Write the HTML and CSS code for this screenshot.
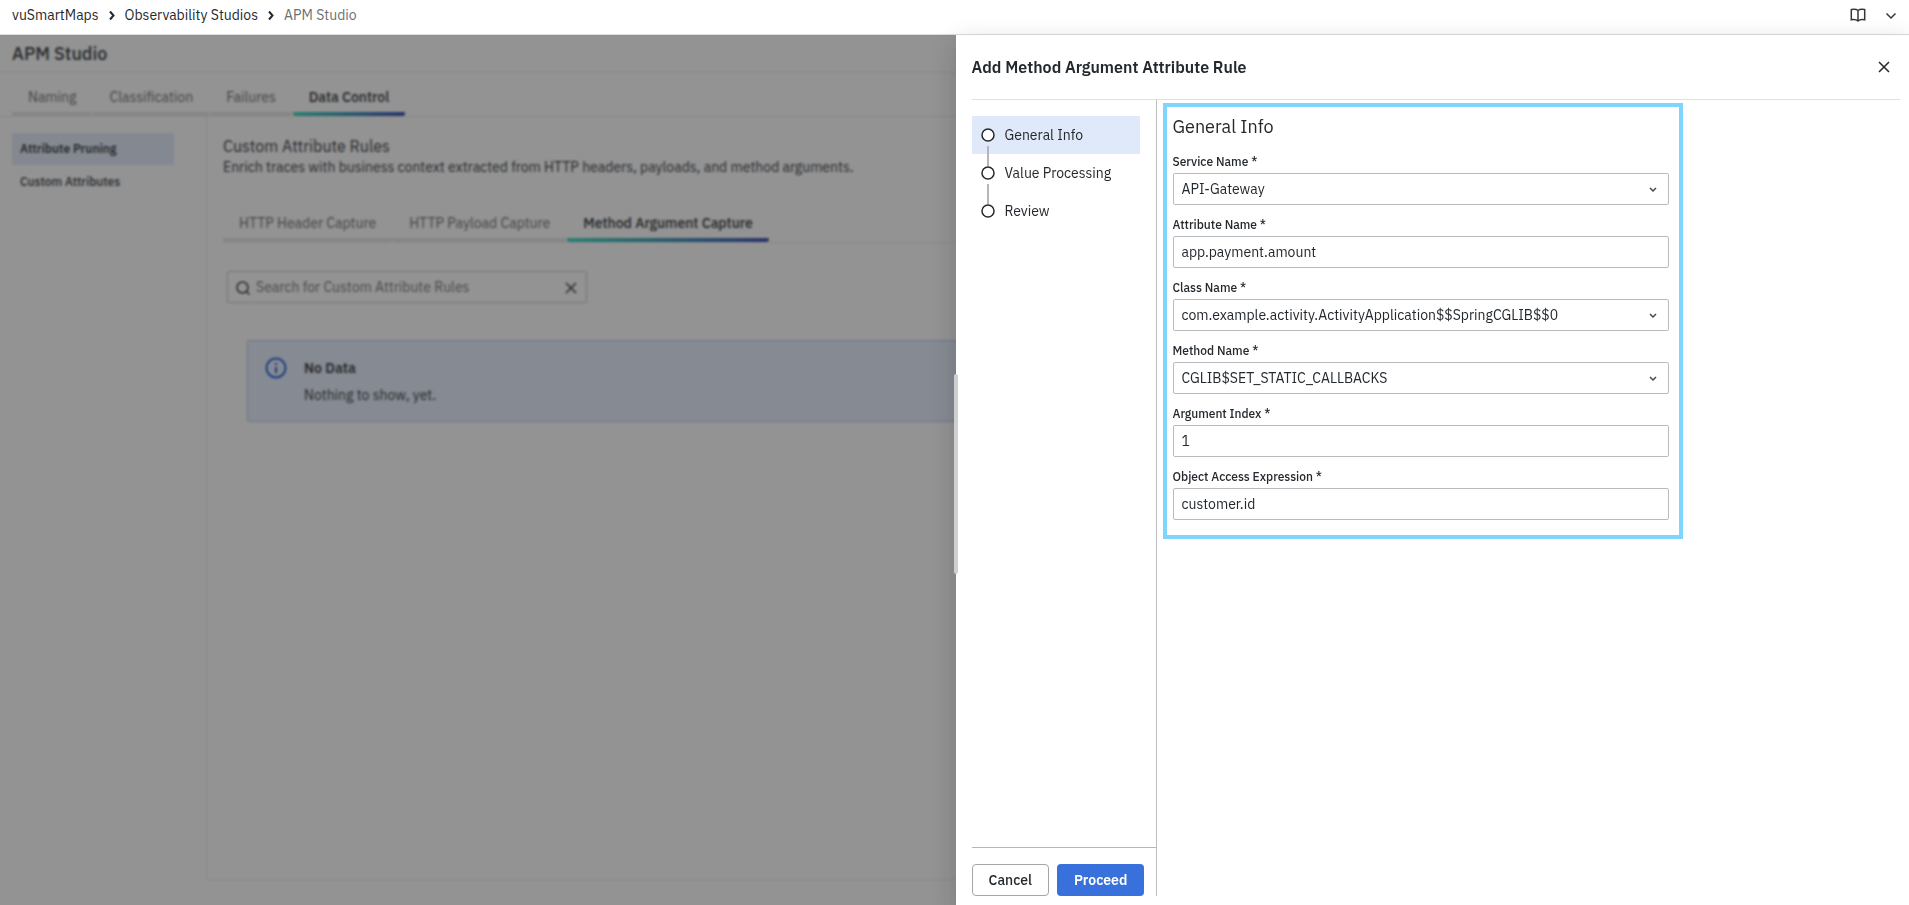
FILE: index.html
```html
<!DOCTYPE html>
<html lang="en">
<head>
    <meta charset="UTF-8">
    <meta name="viewport" content="width=device-width, initial-scale=1.0">
    <title>APM Studio - vuSmartMaps</title>
    <link rel="stylesheet" href="styles.css">
</head>
<body>
    <header class="topbar">
        <nav class="breadcrumbs" aria-label="Breadcrumbs">
            <a href="#">vuSmartMaps</a>
            <svg class="crumb-sep" viewBox="0 0 16 16"><path d="M6 4.500l3.500 4L6 12.500"/></svg>
            <a href="#">Observability Studios</a>
            <svg class="crumb-sep" viewBox="0 0 16 16"><path d="M6 4.500l3.500 4L6 12.500"/></svg>
            <span class="crumb-current">APM Studio</span>
        </nav>
        <div class="topbar-actions">
            <button class="icon-button" type="button" aria-label="Documentation">
                <svg class="icon" viewBox="0 0 16 16"><path d="M8 3.500C6.500 2.300 4 2.100 1.300 2.600V12.800C4 12.400 6.500 12.600 8 14C9.500 12.600 12 12.400 14.700 12.800V2.600C12 2.100 9.500 2.300 8 3.500ZM8 3.500V14"/></svg>
            </button>
            <button class="icon-button" type="button" aria-label="Toggle top bar">
                <svg class="icon" viewBox="0 0 16 16"><path d="M3.500 6.500L8 11L12.500 6.500"/></svg>
            </button>
        </div>
    </header>

    <div class="workspace">
        <main class="page">
            <h1 class="page-title">APM Studio</h1>
            <nav class="tabs main-tabs">
                <a class="tab" href="#">Naming</a>
                <a class="tab" href="#">Classification</a>
                <a class="tab" href="#">Failures</a>
                <a class="tab active" href="#">Data Control</a>
            </nav>
            <div class="page-body">
                <nav class="side-menu">
                    <a class="side-link active" href="#">Attribute Pruning</a>
                    <a class="side-link" href="#">Custom Attributes</a>
                </nav>
                <section class="rules">
                    <h2 class="rules-title">Custom Attribute Rules</h2>
                    <p class="rules-text">Enrich traces with business context extracted from HTTP headers, payloads, and method arguments.</p>
                    <nav class="tabs rules-tabs">
                        <a class="tab" href="#">HTTP Header Capture</a>
                        <a class="tab" href="#">HTTP Payload Capture</a>
                        <a class="tab active" href="#">Method Argument Capture</a>
                    </nav>
                    <div class="search">
                        <svg class="icon" viewBox="0 0 16 16"><circle cx="7.500" cy="8.500" r="5.500"/><path d="M11.500 12.500l3 3"/></svg>
                        <input class="search-input" type="text" placeholder="Search for Custom Attribute Rules" aria-label="Search for Custom Attribute Rules">
                        <button class="icon-button" type="button" aria-label="Clear search">
                            <svg class="icon" viewBox="0 0 16 16"><path d="M3 4l10 10M13 4L3 14"/></svg>
                        </button>
                    </div>
                    <div class="notice">
                        <svg class="notice-icon" viewBox="0 0 24 24"><circle cx="12" cy="12" r="9.500"/><path d="M12 11v6M12 7v2"/></svg>
                        <div>
                            <h3 class="notice-title">No Data</h3>
                            <p class="notice-text">Nothing to show, yet.</p>
                        </div>
                    </div>
                </section>
            </div>
        </main>

        <div class="backdrop"></div>

        <aside class="drawer" role="dialog" aria-labelledby="drawerTitle">
            <div class="drawer-handle"></div>
            <div class="drawer-header">
                <h2 class="drawer-title" id="drawerTitle">Add Method Argument Attribute Rule</h2>
                <button class="icon-button" type="button" aria-label="Close">
                    <svg class="icon" viewBox="0 0 16 16"><path d="M3 3l10 10M13 3L3 13"/></svg>
                </button>
            </div>
            <div class="drawer-body">
                <div class="wizard">
                    <ol class="steps">
                        <li class="step active"><svg class="step-dot" viewBox="0 0 14 14"><circle cx="7" cy="7" r="6"/></svg>General Info</li>
                        <li class="step"><svg class="step-dot" viewBox="0 0 14 14"><circle cx="7" cy="7" r="6"/></svg>Value Processing</li>
                        <li class="step"><svg class="step-dot" viewBox="0 0 14 14"><circle cx="7" cy="7" r="6"/></svg>Review</li>
                    </ol>
                    <div class="wizard-footer">
                        <button class="button secondary" type="button">Cancel</button>
                        <button class="button primary" type="submit" form="ruleForm">Proceed</button>
                    </div>
                </div>
                <form class="rule-form" id="ruleForm">
                    <h3 class="form-title">General Info</h3>

                    <div class="field">
                        <label for="serviceName">Service Name *</label>
                        <div class="select-wrap">
                            <select class="control" id="serviceName"><option>API-Gateway</option></select>
                            <svg class="select-arrow" viewBox="0 0 16 16"><path d="M5 7l3 3l3-3"/></svg>
                        </div>
                    </div>
                    <div class="field">
                        <label for="attributeName">Attribute Name *</label>
                        <input class="control" type="text" id="attributeName" value="app.payment.amount">
                    </div>
                    <div class="field">
                        <label for="className">Class Name *</label>
                        <div class="select-wrap">
                            <select class="control" id="className"><option>com.example.activity.ActivityApplication$$SpringCGLIB$$0</option></select>
                            <svg class="select-arrow" viewBox="0 0 16 16"><path d="M5 7l3 3l3-3"/></svg>
                        </div>
                    </div>
                    <div class="field">
                        <label for="methodName">Method Name *</label>
                        <div class="select-wrap">
                            <select class="control" id="methodName"><option>CGLIB$SET_STATIC_CALLBACKS</option></select>
                            <svg class="select-arrow" viewBox="0 0 16 16"><path d="M5 7l3 3l3-3"/></svg>
                        </div>
                    </div>
                    <div class="field">
                        <label for="argumentIndex">Argument Index *</label>
                        <input class="control" type="text" id="argumentIndex" value="1">
                    </div>
                    <div class="field">
                        <label for="accessExpression">Object Access Expression *</label>
                        <input class="control" type="text" id="accessExpression" value="customer.id">
                    </div>
                </form>
            </div>
        </aside>
    </div>
</body>
</html>
```
FILE: styles.css
```css
* {
    box-sizing: border-box;
}

body {
    display: flex;
    flex-direction: column;
    height: 100vh;
    margin: 0;
    overflow: hidden;
    font-family: "IBM Plex Sans", "Noto Sans", sans-serif;
    font-size: 14px;
    line-height: 20px;
    color: #24292e;
    background-color: #fff;
}

h1, h2, h3, p, ol {
    margin: 0;
    padding: 0;
}

a {
    color: inherit;
    text-decoration: none;
}

button, input, select {
    font: inherit;
    color: inherit;
}

svg {
    flex: none;
    fill: none;
    stroke: currentColor;
    stroke-width: 1.5;
}

.icon {
    display: block;
    width: 16px;
    height: 16px;
}

.icon-button {
    padding: 0;
    border: none;
    background: none;
    cursor: pointer;
}

/* top bar */
.topbar {
    display: flex;
    align-items: center;
    justify-content: space-between;
    height: 35px;
    padding: 0 10px 4px 12px;
    border-bottom: 1px solid #dcddde;
}

.breadcrumbs {
    display: flex;
    align-items: center;
    gap: 5px;
}

.crumb-sep {
    width: 16px;
    height: 16px;
    stroke-width: 2;
}

.crumb-current {
    color: #6b6f73;
}

.topbar-actions {
    display: flex;
    gap: 17px;
    color: #34383c;
}

/* page behind the drawer */
.workspace {
    position: relative;
    flex: 1;
    min-height: 0;
}

.page {
    display: flex;
    flex-direction: column;
    height: 100%;
    color: #43484d;
    background-color: #f5f5f5;
}

.page-title {
    padding: 6px 12px;
    font-size: 18px;
    font-weight: 500;
    line-height: 25px;
    border-bottom: 1px solid #e6e6e7;
}

.tabs {
    display: flex;
    gap: 1px;
    border-bottom: 1px solid #e6e6e7;
}

.main-tabs {
    padding: 8px 12px 0;
}

.tab {
    padding: 6px 16px 5px;
    border-bottom: 4px solid #dfdfe0;
    border-radius: 2px;
    color: #73777b;
}

.tab.active {
    color: #3a3f44;
    font-weight: 500;
    border-bottom-color: transparent;
    background: linear-gradient(90deg, #45d6bd, #4659b5) bottom / 100% 4px no-repeat border-box;
}

.page-body {
    display: flex;
    flex: 1;
    min-height: 0;
    padding-bottom: 25px;
}

.side-menu {
    display: flex;
    flex-direction: column;
    gap: 1px;
    width: 206px;
    padding: 16px 32px 0 12px;
    font-size: 12px;
    font-weight: 500;
}

.side-link {
    padding: 6px 8px;
}

.side-link.active {
    font-weight: 600;
    background-color: #dde4f2;
}

.rules {
    flex: 1;
    padding: 18px 16px;
    border: 1px solid #e6e6e7;
    border-top: none;
}

.rules-title {
    font-size: 16px;
    font-weight: 400;
    line-height: 22px;
}

.rules-text {
    line-height: 20px;
}

.rules-tabs {
    margin-top: 30px;
}

.search {
    display: flex;
    align-items: center;
    gap: 5px;
    width: 360px;
    height: 32px;
    margin: 28px 4px 0;
    padding: 0 7px;
    border: 1px solid #c4c5c7;
    border-radius: 2px;
}

.search-input {
    flex: 1;
    min-width: 0;
    padding: 0;
    border: none;
    background: none;
}

.search-input::placeholder {
    color: #7b7f83;
    opacity: 1;
}

.notice {
    display: flex;
    gap: 16px;
    margin: 37px 24px 0;
    padding: 15px 16px;
    border: 1px solid #b7c8ec;
    border-radius: 2px;
    background-color: #dfe6f3;
}

.notice-icon {
    width: 24px;
    height: 24px;
    color: #2f66d8;
    stroke-width: 2;
}

.notice-title {
    font-size: 14px;
    font-weight: 600;
    line-height: 24px;
}

.notice-text {
    padding-top: 4px;
    line-height: 22px;
}

.backdrop {
    position: absolute;
    inset: 0;
    background-color: rgba(0, 0, 0, 0.4);
    backdrop-filter: blur(1px);
}

/* drawer */
.drawer {
    position: absolute;
    top: 0;
    right: 0;
    bottom: 0;
    left: calc(50% + 1px);
    display: flex;
    flex-direction: column;
    padding: 0 9px 9px 16px;
    background-color: #fff;
    box-shadow: 0 8px 24px rgba(24, 26, 27, 0.2);
}

.drawer-handle {
    position: absolute;
    top: calc(50% - 96px);
    left: -2px;
    width: 4px;
    height: 200px;
    border-radius: 4px;
    background-color: #cdcfd0;
}

.drawer-header {
    display: flex;
    align-items: center;
    justify-content: space-between;
    height: 65px;
    padding-right: 8px;
    border-bottom: 1px solid #e0e1e2;
}

.drawer-title {
    font-size: 16px;
    font-weight: 600;
    line-height: 22px;
}

.drawer-body {
    display: flex;
    align-items: flex-start;
    flex: 1;
    gap: 6px;
}

.wizard {
    display: flex;
    flex-direction: column;
    align-self: stretch;
    justify-content: space-between;
    width: 185px;
    border-right: 1px solid #bdbec0;
}

.steps {
    padding: 16px 16px 0 0;
    list-style: none;
}

.step {
    position: relative;
    display: flex;
    align-items: center;
    gap: 10px;
    height: 38px;
    padding-left: 9px;
}

.step.active {
    background-color: #e0e9fa;
}

.step-dot {
    width: 14px;
    height: 14px;
    fill: #fff;
}

/* line that joins a step to the next one */
.step:not(:last-child)::after {
    content: "";
    position: absolute;
    top: 30px;
    left: 15px;
    z-index: 1;
    width: 2px;
    height: 20px;
    background-color: #b4b6b9;
}

.wizard-footer {
    display: flex;
    gap: 8px;
    padding-top: 16px;
    border-top: 1px solid #b4b6b9;
}

.button {
    height: 32px;
    padding: 0 16px;
    border: 1px solid transparent;
    border-radius: 4px;
    font-weight: 500;
    cursor: pointer;
}

.button.secondary {
    border-color: #a4a6a9;
    background-color: #fff;
}

.button.primary {
    color: #fff;
    font-weight: 600;
    background-color: #3871dc;
}

.rule-form {
    flex: 1;
    max-width: 520px;
    margin-top: 3px;
    padding: 6px 10px 15px 6px;
    border: 4px solid #80d5ff;
}

.form-title {
    padding: 2px 0 15px;
    font-size: 18px;
    font-weight: 400;
    line-height: 24px;
}

.field {
    padding-bottom: 12px;
}

.field:last-child {
    padding-bottom: 0;
}

.field label {
    display: block;
    padding-bottom: 3px;
    font-size: 12px;
    font-weight: 500;
    line-height: 16px;
}

.select-wrap {
    position: relative;
}

.control {
    display: block;
    width: 100%;
    height: 32px;
    padding: 0 8px;
    border: 1px solid #babbbe;
    border-radius: 2px;
    background-color: #fff;
    appearance: none;
}

.select-arrow {
    position: absolute;
    top: 8px;
    right: 8px;
    width: 16px;
    height: 16px;
    color: #44484c;
    pointer-events: none;
}
```
